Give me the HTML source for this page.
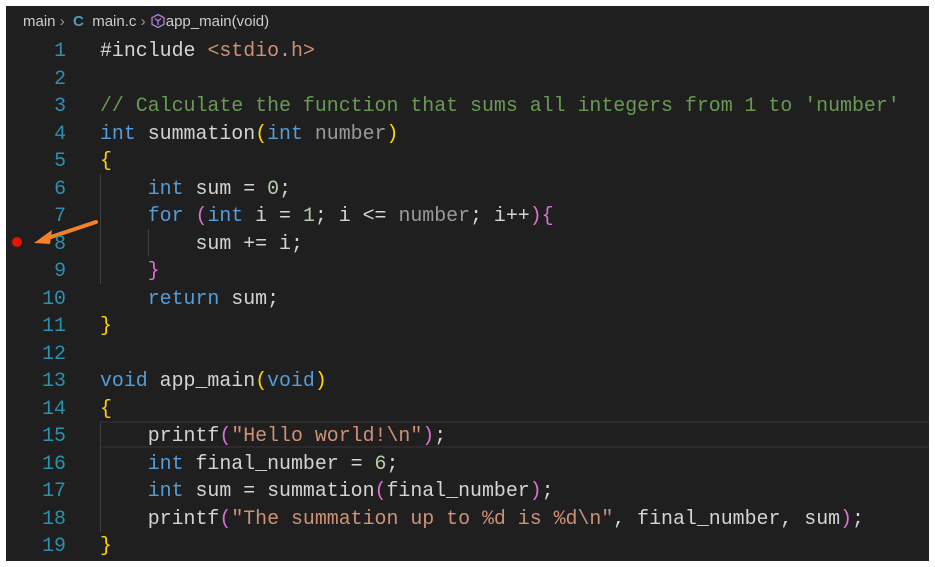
<!DOCTYPE html>
<html><head><style>
body{margin:0;background:#fff;width:935px;height:567px;overflow:hidden;position:relative}
#p{position:absolute;left:6px;top:6px;width:923px;height:555px;background:#1f1f1f;overflow:hidden}
#bc{position:absolute;left:17px;top:7px;font:15px "Liberation Sans",sans-serif;color:#cccccc;white-space:nowrap}
.code{position:absolute;left:0;top:31px;font:19.9px/27.5px "Liberation Mono",monospace;color:#d4d4d4;white-space:pre}
.ln{position:absolute;left:0;top:31px;width:60px;text-align:right;color:#2b91af;font:19.9px/27.5px "Liberation Mono",monospace}
.k{color:#569cd6}.f{color:#dcdcaa}.c{color:#6a9955}.s{color:#ce9178}.n{color:#b5cea8}.g{color:#9a9a9a}
.b1{color:#ffd700}.b2{color:#da70d6}.b3{color:#179fff}
.guide{position:absolute;width:1px;background:#404040}
</style></head><body>
<div id="p">
<div id="bc">main <span style="color:#999">›</span> &nbsp;<b style="color:#519aba">C</b> &nbsp;main.c <span style="color:#999">›</span> <svg width="16" height="16" viewBox="0 0 16 16" style="vertical-align:-3px"><path d="M8 1.5l6 3.2v6.6L8 14.5l-6-3.2V4.7z" fill="none" stroke="#b180d7" stroke-width="1.3"/><path d="M5 5.5l3 2.5 3-2.5M8 8v4" fill="none" stroke="#b180d7" stroke-width="1.3"/></svg>app_main(void)</div>
<div style="position:absolute;left:94px;top:414.5px;width:829px;height:27.5px;border-top:2px solid #2a2a2a;border-bottom:2px solid #2a2a2a;box-sizing:border-box"></div>
<div class="guide" style="left:94px;top:168px;height:110px"></div>
<div class="guide" style="left:141.5px;top:223px;height:27px"></div>
<div class="guide" style="left:94px;top:416px;height:110px"></div>
<div style="position:absolute;left:6px;top:231px;width:10px;height:10px;border-radius:50%;background:#e51400"></div>
<svg style="position:absolute;left:22px;top:212px" width="72" height="30"><path d="M68 4L14 22" stroke="#f5822a" stroke-width="4" stroke-linecap="round"/><path d="M6 25L24 12L22 26Z" fill="#f5822a"/></svg>
<div class="ln">1<br>2<br>3<br>4<br>5<br>6<br>7<br>8<br>9<br>10<br>11<br>12<br>13<br>14<br>15<br>16<br>17<br>18<br>19</div>
<div class="code" style="left:94px">#include <span class="s">&lt;stdio.h&gt;</span>

<span class="c">// Calculate the function that sums all integers from 1 to 'number'</span>
<span class="k">int</span> summation<span class="b1">(</span><span class="k">int</span> <span class="g">number</span><span class="b1">)</span>
<span class="b1">{</span>
    <span class="k">int</span> sum = <span class="n">0</span>;
    <span class="k">for</span> <span class="b2">(</span><span class="k">int</span> i = <span class="n">1</span>; i &lt;= <span class="g">number</span>; i++<span class="b2">){</span>
        sum += i;
    <span class="b2">}</span>
    <span class="k">return</span> sum;
<span class="b1">}</span>

<span class="k">void</span> app_main<span class="b1">(</span><span class="k">void</span><span class="b1">)</span>
<span class="b1">{</span>
    printf<span class="b2">(</span><span class="s">"Hello world!\n"</span><span class="b2">)</span>;
    <span class="k">int</span> final_number = <span class="n">6</span>;
    <span class="k">int</span> sum = summation<span class="b2">(</span>final_number<span class="b2">)</span>;
    printf<span class="b2">(</span><span class="s">"The summation up to %d is %d\n"</span>, final_number, sum<span class="b2">)</span>;
<span class="b1">}</span></div>
</div>
</body></html>
